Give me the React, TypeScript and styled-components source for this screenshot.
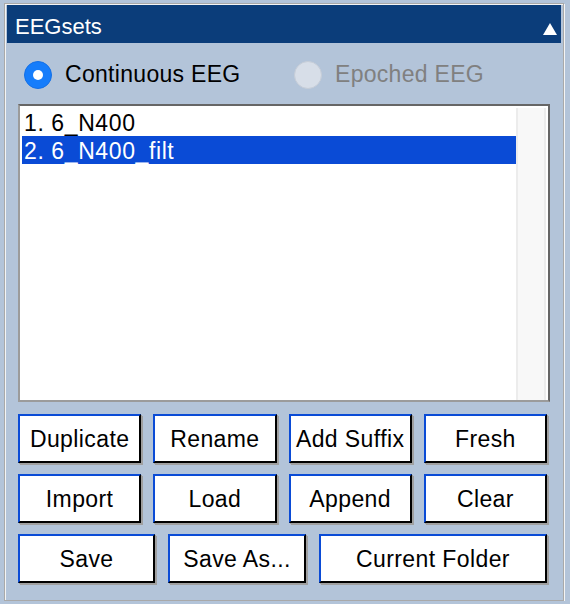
import React from "react";
import styled, { createGlobalStyle } from "styled-components";

const Global = createGlobalStyle`
  html, body { margin: 0; padding: 0; background: #b3c4d9; }
  body { font-family: "Liberation Sans", Arial, Helvetica, sans-serif; }
`;

const Frame = styled.div`
  box-sizing: border-box;
  margin: 3px 0 0 4px;
  width: 560px;
  height: 598px;
  border: 1px solid #a9a9a9;
  box-shadow: inset 1px 1px 0 #f4f4f4, 1px 1px 0 #f4f4f4;
  padding: 1px 2px 2px 2px;
  display: flex;
  flex-direction: column;
  background: #b3c4d9;
`;

const Header = styled.div`
  box-sizing: border-box;
  height: 38px;
  background: #0b3d7a;
  color: #fff;
  display: flex;
  align-items: center;
  justify-content: space-between;
  padding: 5px 4px 0 8px;
  font-size: 22px;
`;

const Caret = styled.span`
  width: 0;
  height: 0;
  border-left: 7px solid transparent;
  border-right: 7px solid transparent;
  border-bottom: 12px solid #fff;
  margin-top: 4px;
`;

const RadioRow = styled.div`
  box-sizing: border-box;
  height: 61px;
  display: flex;
  align-items: center;
  padding: 2px 0 0 17px;
`;

const RadioItem = styled.label<{ $disabled?: boolean; $width?: number }>`
  display: flex;
  align-items: center;
  gap: 13px;
  width: ${(p) => p.$width ?? 240}px;
  font-size: 23px;
  letter-spacing: 0.3px;
  color: ${(p) => (p.$disabled ? "#808080" : "#000")};
`;

const RadioDot = styled.span<{ $on?: boolean }>`
  box-sizing: border-box;
  flex: none;
  width: 28px;
  height: 28px;
  border-radius: 50%;
  display: flex;
  align-items: center;
  justify-content: center;
  background: ${(p) => (p.$on ? "#167dfb" : "#d7dee8")};
  border: 1px solid ${(p) => (p.$on ? "#1470e6" : "#c6cdd8")};
  &::after {
    content: "";
    display: ${(p) => (p.$on ? "block" : "none")};
    width: 10px;
    height: 10px;
    border-radius: 50%;
    background: #fff;
  }
`;

const ListBox = styled.div`
  box-sizing: border-box;
  margin-left: 11px;
  width: 532px;
  height: 298px;
  background: #fff;
  border-top: 2px solid #666;
  border-right: 2px solid #666;
  border-bottom: 2px solid #9b9b9b;
  border-left: 2px solid #9b9b9b;
  display: flex;
  padding: 2px 2px 0 2px;
`;

const Items = styled.div`
  flex: 1;
  display: flex;
  flex-direction: column;
`;

const Item = styled.div<{ $sel?: boolean }>`
  box-sizing: border-box;
  height: 28px;
  line-height: 26px;
  padding-top: 2px;
  font-size: 23px;
  letter-spacing: 0.6px;
  padding-left: 2px;
  background: ${(p) => (p.$sel ? "#0a4bd6" : "transparent")};
  color: ${(p) => (p.$sel ? "#fff" : "#000")};
  white-space: pre;
`;

const Track = styled.div`
  box-sizing: border-box;
  width: 30px;
  background: #f8f8f8;
  border-left: 2px solid #ececec;
  border-right: 2px solid #ececec;
`;

const Btn = styled.button`
  box-sizing: border-box;
  height: 49px;
  background: #fff;
  border-top: 2px solid #0a4bd6;
  border-left: 2px solid #0a4bd6;
  border-right: 2px solid #000;
  border-bottom: 2px solid #000;
  box-shadow: 1px 1px 0 0 #a0a0a0, 2px 2px 0 0 #a0a0a0;
  font-family: "Liberation Sans", Arial, Helvetica, sans-serif;
  font-size: 23px;
  letter-spacing: 0.4px;
  color: #000;
  padding: 2px 0 0 0;
  white-space: nowrap;
`;

const Buttons = styled.div`
  display: flex;
  flex-direction: column;
  padding-top: 12px;
  gap: 11px;
`;

const Row = styled.div<{ $cols: string; $gap: number }>`
  display: grid;
  grid-template-columns: ${(p) => p.$cols};
  column-gap: ${(p) => p.$gap}px;
  margin-left: 11px;
  width: 529px;
`;

export default function App() {
  return (
    <>
      <Global />
      <Frame>
        <Header>
          <span>EEGsets</span>
          <Caret />
        </Header>
        <RadioRow>
          <RadioItem $width={270}>
            <RadioDot $on />
            Continuous EEG
          </RadioItem>
          <RadioItem $disabled>
            <RadioDot />
            Epoched EEG
          </RadioItem>
        </RadioRow>
        <ListBox>
          <Items>
            <Item>1. 6_N400</Item>
            <Item $sel>2. 6_N400_filt</Item>
          </Items>
          <Track />
        </ListBox>
        <Buttons>
          <Row $cols="1fr 1fr 1fr 1fr" $gap={12}>
            <Btn>Duplicate</Btn>
            <Btn>Rename</Btn>
            <Btn>Add Suffix</Btn>
            <Btn>Fresh</Btn>
          </Row>
          <Row $cols="1fr 1fr 1fr 1fr" $gap={12}>
            <Btn>Import</Btn>
            <Btn>Load</Btn>
            <Btn>Append</Btn>
            <Btn>Clear</Btn>
          </Row>
          <Row $cols="137px 138px 1fr" $gap={13}>
            <Btn>Save</Btn>
            <Btn>Save As...</Btn>
            <Btn>Current Folder</Btn>
          </Row>
        </Buttons>
      </Frame>
    </>
  );
}
